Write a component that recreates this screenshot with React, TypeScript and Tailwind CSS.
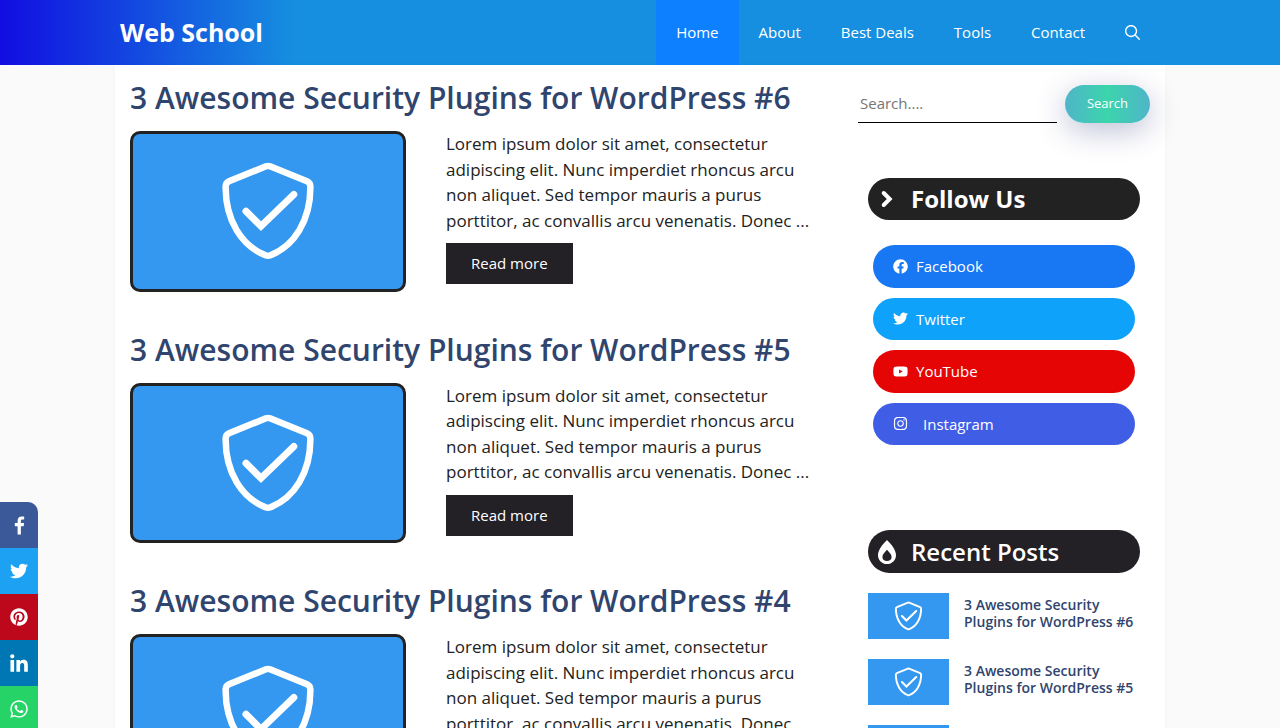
import type { ReactNode } from 'react';
import { FaFacebook, FaInstagram, FaPinterest, FaTwitter, FaWhatsapp, FaYoutube } from 'react-icons/fa';

const navItems = ['Home', 'About', 'Best Deals', 'Tools', 'Contact'];

const posts = [
  '3 Awesome Security Plugins for WordPress #6',
  '3 Awesome Security Plugins for WordPress #5',
  '3 Awesome Security Plugins for WordPress #4',
];

const excerpt =
  'Lorem ipsum dolor sit amet, consectetur adipiscing elit. Nunc imperdiet rhoncus arcu non aliquet. Sed tempor mauris a purus porttitor, ac convallis arcu venenatis. Donec ...';

const socials = [
  { name: 'Facebook', icon: <FaFacebook />, bg: 'bg-[#1877f2]', gap: 'gap-2' },
  { name: 'Twitter', icon: <FaTwitter />, bg: 'bg-[#0fa2fa]', gap: 'gap-2' },
  { name: 'YouTube', icon: <FaYoutube />, bg: 'bg-[#e60505]', gap: 'gap-2' },
  { name: 'Instagram', icon: <FaInstagram />, bg: 'bg-[#405de6]', gap: 'gap-[15px]' },
];

const shares = [
  { name: 'Facebook', icon: <FacebookLetter />, bg: 'bg-[#3b5998]' },
  { name: 'Twitter', icon: <FaTwitter />, bg: 'bg-[#1da1f2]' },
  { name: 'Pinterest', icon: <FaPinterest />, bg: 'bg-[#bd081c]' },
  { name: 'LinkedIn', icon: <LinkedInMark />, bg: 'bg-[#0077b5]' },
  { name: 'WhatsApp', icon: <FaWhatsapp className="size-5" />, bg: 'bg-[#25d366]' },
];

function FacebookLetter() {
  return (
    <svg viewBox="0 0 32 32" className="size-[25px]" fill="currentColor" aria-hidden="true">
      <path d="M17.78 27.5V17.008h3.522l.527-4.09h-4.05v-2.61c0-1.182.33-1.99 2.023-1.99h2.166V4.66c-.375-.05-1.66-.16-3.155-.16-3.123 0-5.26 1.905-5.26 5.405v3.016h-3.53v4.09h3.53V27.5h4.223z" />
    </svg>
  );
}

function LinkedInMark() {
  return (
    <svg viewBox="0 0 32 32" className="size-7" fill="currentColor" aria-hidden="true">
      <path d="M6.227 12.61h4.19v13.48h-4.19V12.61zm2.095-6.7a2.43 2.43 0 0 1 0 4.86c-1.344 0-2.428-1.09-2.428-2.43s1.084-2.43 2.428-2.43m4.72 6.7h4.02v1.84h.058c.56-1.058 1.927-2.176 3.965-2.176 4.238 0 5.02 2.792 5.02 6.42v7.395h-4.183v-6.56c0-1.564-.03-3.574-2.178-3.574-2.18 0-2.514 1.7-2.514 3.46v6.668h-4.187V12.61z" />
    </svg>
  );
}

function ShieldImage({ className }: { className: string }) {
  return (
    <svg viewBox="0 0 270 154.5" className={className} fill="none" stroke="#fff" strokeWidth="6.5" aria-hidden="true">
      <path
        d="M133 32.3Q135 31.5 137 32.3L174 47.2Q177.400 48.600 177.400 53C177.400 87 161 112 137.500 121.300Q135 122.300 132.500 121.300C109 112 92.600 87 92.600 53Q92.600 48.600 96 47.200Z"
        strokeLinejoin="round"
      />
      <path d="M113 77.200L128 92.200L160.800 60.500" strokeWidth="7" strokeLinecap="round" />
    </svg>
  );
}

function SearchIcon() {
  return (
    <svg viewBox="0 0 512 512" className="size-[15px]" fill="currentColor" aria-hidden="true">
      <path
        fillRule="evenodd"
        clipRule="evenodd"
        d="M208 48c-88.366 0-160 71.634-160 160s71.634 160 160 160 160-71.634 160-160S296.366 48 208 48zM0 208C0 93.125 93.125 0 208 0s208 93.125 208 208c0 48.741-16.765 93.566-44.843 129.024l133.826 134.018c9.366 9.379 9.355 24.575-.025 33.941-9.379 9.366-24.575 9.355-33.941-.025L337.238 370.987C301.747 399.167 256.839 416 208 416 93.125 416 0 322.875 0 208z"
      />
    </svg>
  );
}

function ChevronIcon() {
  return (
    <svg viewBox="0 0 18 24" className="h-6 w-[18px]" fill="none" stroke="currentColor" strokeWidth="4" aria-hidden="true">
      <path d="M5.700 6L11.700 12L5.700 18" strokeLinecap="round" />
    </svg>
  );
}

function FlameIcon() {
  return (
    <svg viewBox="0 0 18 24" className="h-6 w-[18px]" fill="currentColor" aria-hidden="true">
      <path
        fillRule="evenodd"
        d="M9 0C12.500 3.500 18 9.500 18 15.200C18 20.300 14 24 9 24S0 20.300 0 15.200C0 9.500 5.500 3.500 9 0ZM9 9.800C7 12 4.400 14.300 4.400 17C4.400 19.400 6.400 21 9 21S13.600 19.400 13.600 17C13.600 14.300 11 12 9 9.800Z"
      />
    </svg>
  );
}

function WidgetTitle({ icon, className, children }: { icon: ReactNode; className: string; children: ReactNode }) {
  return (
    <h2 className={`flex items-center rounded-full pl-2.5 text-2xl text-white ${className}`}>
      <span className="flex w-[33px]">{icon}</span>
      {children}
    </h2>
  );
}

function Header() {
  return (
    <header className="bg-[linear-gradient(90deg,#110de1_0%,#168fe0_23%)] text-white">
      <div className="mx-auto flex max-w-[1050px] items-center justify-between px-[5px]">
        <a href="#" className="text-[25px] font-bold">
          Web School
        </a>
        <nav className="flex text-[15px] leading-[65px]">
          {navItems.map((item) => (
            <a key={item} href="#" className={`px-5 ${item === 'Home' ? 'bg-[#0d80ff]' : ''}`}>
              {item}
            </a>
          ))}
          <button type="button" aria-label="Open search" className="px-5">
            <SearchIcon />
          </button>
        </nav>
      </div>
    </header>
  );
}

function Article({ title }: { title: string }) {
  return (
    <article>
      <h2 className="text-3xl leading-9 font-semibold text-[#2f456e]">
        <a href="#">{title}</a>
      </h2>
      <div className="mt-[15px] flex items-start gap-10">
        <a href="#" aria-label={title} className="w-[276px] shrink-0 overflow-hidden rounded-[10px] border-3 border-[#222] bg-[#3498f0]">
          <ShieldImage className="block w-full" />
        </a>
        <div>
          <p className="text-[17px] leading-normal text-[#222]">{excerpt}</p>
          <a href="#" className="mt-2.5 inline-block bg-[#232026] px-[25px] text-[15px] leading-[41px] text-white">
            Read more
          </a>
        </div>
      </div>
    </article>
  );
}

function Sidebar() {
  return (
    <aside className="w-[292px] shrink-0 pt-5">
      <form className="flex gap-2" onSubmit={(e) => e.preventDefault()}>
        <input
          type="search"
          aria-label="Search"
          placeholder="Search...."
          className="min-w-0 flex-1 border-b border-black px-0.5 text-[15px] outline-none placeholder:text-[#757575]"
        />
        <button
          type="submit"
          className="h-[38px] w-[85px] rounded-full bg-[linear-gradient(90deg,#4fb5c9,#3bd5ac,#4fb5c9)] text-[13px] text-white shadow-[0_8px_30px_rgba(40,50,120,0.3)]"
        >
          Search
        </button>
      </form>

      <section className="mt-[55px] px-2.5">
        <WidgetTitle icon={<ChevronIcon />} className="bg-[#222] leading-[42px] font-bold">
          Follow Us
        </WidgetTitle>
        <ul className="mt-[25px] flex flex-col gap-2.5 px-[5px]">
          {socials.map(({ name, icon, bg, gap }) => (
            <li key={name}>
              <a href="#" className={`flex items-center rounded-full px-5 py-2.5 text-[15px] leading-normal text-white ${bg} ${gap}`}>
                {icon}
                {name}
              </a>
            </li>
          ))}
        </ul>
      </section>

      <section className="mt-[85px] px-2.5">
        <WidgetTitle icon={<FlameIcon />} className="bg-[#232026] leading-[43px] font-semibold">
          Recent Posts
        </WidgetTitle>
        <ul className="mt-5 flex flex-col gap-5">
          {posts.map((title) => (
            <li key={title}>
              <a href="#" className="flex gap-[15px] text-sm leading-[17px] font-semibold text-[#2f456e]">
                <ShieldImage className="block h-[46px] w-[81px] shrink-0 bg-[#3498f0]" />
                <span className="pt-[3px]">{title}</span>
              </a>
            </li>
          ))}
        </ul>
      </section>
    </aside>
  );
}

function ShareBar() {
  return (
    <div className="fixed top-[502px] left-0 w-[38px] overflow-hidden rounded-tr-[10px]">
      {shares.map(({ name, icon, bg }) => (
        <a key={name} href="#" aria-label={`Share on ${name}`} className={`flex h-[46px] items-center justify-center text-lg text-white ${bg}`}>
          {icon}
        </a>
      ))}
    </div>
  );
}

export default function App() {
  return (
    <div className="min-h-screen bg-[#fafafa] font-['Open_Sans',sans-serif]">
      <Header />
      <div className="mx-auto flex max-w-[1050px] justify-between bg-white px-[15px] shadow-[0_0_10px_rgba(0,0,0,0.02)]">
        <main className="flex max-w-[680px] flex-col gap-10 py-[15px]">
          {posts.map((title) => (
            <Article key={title} title={title} />
          ))}
        </main>
        <Sidebar />
      </div>
      <ShareBar />
    </div>
  );
}
